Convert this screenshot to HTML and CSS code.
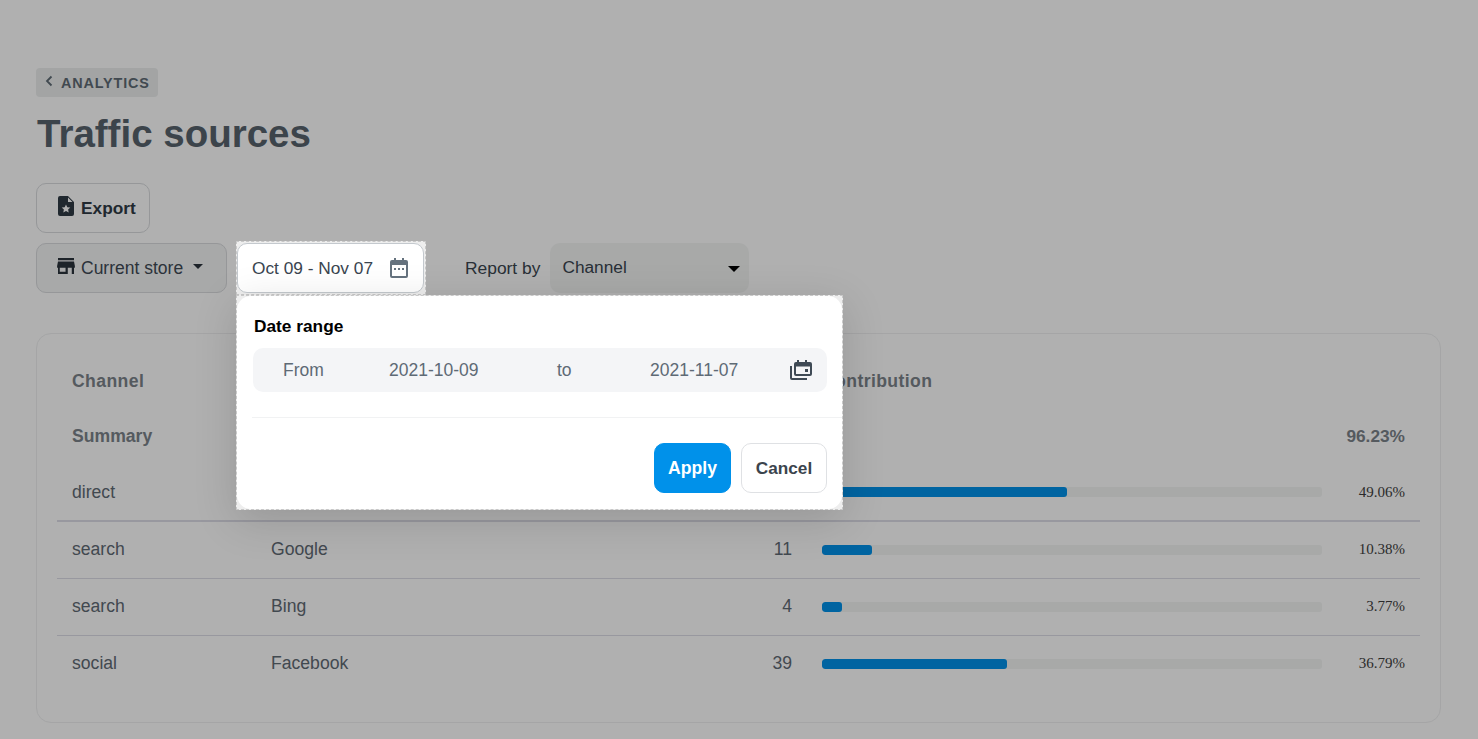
FILE: index.html
```html
<!DOCTYPE html>
<html lang="en">
<head>
<meta charset="utf-8">
<title>Traffic sources</title>
<link rel="stylesheet" href="styles.css">
</head>
<body>
<main class="page">
  <a class="back" href="#">
    <svg class="back-icon" viewBox="0 0 10 12" width="10" height="12"><path d="M7.500 1.500 3 6l4.500 4.500" fill="none" stroke="currentColor" stroke-width="1.800"/></svg>
    <span>ANALYTICS</span>
  </a>
  <h1 class="title">Traffic sources</h1>
  <div class="toolbar">
    <button class="btn btn-export" type="button">
      <svg viewBox="0 0 16 20" width="16" height="20"><path fill-rule="evenodd" fill="currentColor" d="M2 0h8l6 6v12a2 2 0 0 1-2 2H2a2 2 0 0 1-2-2V2a2 2 0 0 1 2-2Zm8 1.500V6h4.500ZM8 8.500l1.300 2.700 3 .4-2.200 2 .6 3L8 15.100 5.300 16.600l.6-3-2.200-2 3-.4Z"/></svg>
      Export
    </button>
  </div>
  <div class="filters">
    <button class="btn btn-store" type="button">
      <svg viewBox="0 0 20 18" width="18" height="16"><path fill="currentColor" fill-rule="evenodd" d="M1 0h18v2.500H1ZM1 4h18l1 5v2h-1v7h-2.500v-7H12v7H1v-7H0V9Zm2 7v4.500h6.500V11Z"/></svg>
      Current store
      <span class="caret"></span>
    </button>
    <div class="date-slot"></div>
    <span class="report-label">Report by</span>
    <div class="select"><span>Channel</span><span class="select-caret"></span></div>
  </div>

  <section class="card">
    <table class="report">
      <colgroup><col class="c1"><col class="c2"><col class="c3"><col></colgroup>
      <thead>
        <tr><th>Channel</th><th></th><th class="num"></th><th>Contribution</th></tr>
      </thead>
      <tbody>
        <tr class="summary"><td>Summary</td><td></td><td class="num"></td><td class="pct-big">96.23%</td></tr>
        <tr class="first"><td>direct</td><td></td><td class="num"></td><td><div class="metric"><div class="track"><div class="fill" style="width:49%"></div></div><span class="pct">49.06%</span></div></td></tr>
        <tr><td>search</td><td>Google</td><td class="num">11</td><td><div class="metric"><div class="track"><div class="fill" style="width:10%"></div></div><span class="pct">10.38%</span></div></td></tr>
        <tr><td>search</td><td>Bing</td><td class="num">4</td><td><div class="metric"><div class="track"><div class="fill" style="width:4%"></div></div><span class="pct">3.77%</span></div></td></tr>
        <tr class="last"><td>social</td><td>Facebook</td><td class="num">39</td><td><div class="metric"><div class="track"><div class="fill" style="width:37%"></div></div><span class="pct">36.79%</span></div></td></tr>
      </tbody>
    </table>
  </section>
</main>

<div class="backdrop"></div>

<div class="date-float">
  <button class="date-btn" type="button">
    <span>Oct 09 - Nov 07</span>
    <svg viewBox="0 0 18 20" width="18" height="20"><path fill="currentColor" fill-rule="evenodd" d="M4 0h2v2h6V0h2v2h2a2 2 0 0 1 2 2v14a2 2 0 0 1-2 2H2a2 2 0 0 1-2-2V4a2 2 0 0 1 2-2h2Zm-2 7v11h14V7ZM4 10h2v2H4Zm4 0h2v2H8Zm4 0h2v2h-2Z"/></svg>
  </button>
</div>

<div class="popup-shell">
  <div class="popup">
    <h2 class="popup-title">Date range</h2>
    <div class="range">
      <span class="range-from">From</span>
      <span class="range-start">2021-10-09</span>
      <span class="range-to">to</span>
      <span class="range-end">2021-11-07</span>
      <svg class="range-icon" viewBox="0 0 22 20" width="22" height="20"><path fill="currentColor" fill-rule="evenodd" d="M7 0h2v2h6V0h2v2h3a2 2 0 0 1 2 2v10a2 2 0 0 1-2 2H6a2 2 0 0 1-2-2V4a2 2 0 0 1 2-2h1Zm-1 6.500V14h14V6.500ZM15 9h3v3h-3ZM0 6h2v12h15v2H2a2 2 0 0 1-2-2Z"/></svg>
    </div>
    <div class="popup-foot">
      <button class="btn-apply" type="button">Apply</button>
      <button class="btn-cancel" type="button">Cancel</button>
    </div>
  </div>
</div>
</body>
</html>
```
FILE: styles.css
```css
* { box-sizing: border-box; }
html, body { margin: 0; height: 100%; }
body {
  background: #fff;
  color: #212b36;
  font-family: "Liberation Sans", Arial, sans-serif;
  font-size: 16px;
  overflow: hidden;
}
button { font-family: inherit; cursor: pointer; }

.page { padding: 68px 37px 0 36px; }

.back {
  display: inline-flex;
  align-items: center;
  gap: 7px;
  height: 29px;
  padding: 0 8px;
  background: #eceeee;
  border-radius: 4px;
  color: #5f6b75;
  font-size: 14.4px;
  font-weight: 700;
  letter-spacing: 0.85px;
  text-decoration: none;
  vertical-align: top;
}
.back-icon { margin-top: -3px; }

.title {
  margin: 15px 0 28px 1px;
  font-size: 38.5px;
  line-height: 43px;
  font-weight: 700;
  color: #58636d;
}

.btn {
  display: inline-flex;
  align-items: center;
  height: 50px;
  border: 1px solid #d9dbde;
  border-radius: 10px;
  background: #fff;
  color: #2f3a45;
  font-size: 17.5px;
}
.toolbar { height: 60px; }
.btn-export {
  width: 114px;
  padding: 0 0 0 21px;
  gap: 7px;
  font-weight: 700;
  background: transparent;
  font-size: 17.3px;
}
.btn-export svg { margin-top: -4px; }
.btn-store {
  width: 191px;
  padding: 0 0 0 20px;
  gap: 6px;
  background: #f4f5f5;
  color: #3f4a55;
}
.btn-store svg { margin-top: -4px; color: #2a333c; }
.caret {
  width: 0; height: 0;
  margin: -4px 0 0 4px;
  border-left: 5px solid transparent;
  border-right: 5px solid transparent;
  border-top: 5px solid #2a333c;
}

.filters { display: flex; align-items: center; height: 50px; }
.date-slot { width: 189px; height: 50px; margin-left: 10px; flex: none; }
.date-btn {
  display: flex;
  align-items: center;
  justify-content: space-between;
  width: 187px;
  height: 50px;
  padding: 0 15px 0 14px;
  border: 1px solid #c4c9ce;
  border-radius: 10px;
  background: #fff;
  color: #3a4550;
}
.date-btn span { font-size: 17.3px; }
.date-btn svg { color: #65727e; }

.report-label { margin-left: 39px; color: #3b4650; font-size: 17.4px; }
.select {
  display: flex;
  align-items: center;
  justify-content: space-between;
  width: 199px;
  height: 50px;
  margin-left: 10px;
  padding: 0 9px 2px 12px;
  background: #f3f5f4;
  border-radius: 10px;
  color: #3a4550;
  font-size: 17.3px;
}
.select-caret {
  width: 0; height: 0;
  margin-top: 4px;
  border-left: 6px solid transparent;
  border-right: 6px solid transparent;
  border-top: 6px solid #000;
}

.card {
  margin-top: 40px;
  height: 390px;
  padding: 20px;
  border: 1px solid #eff0f1;
  border-radius: 15px;
  background: #fff;
}
.report { width: 1363px; border-collapse: collapse; table-layout: fixed; color: #5f6a74; }
.c1 { width: 199px; }
.c2 { width: 300px; }
.c3 { width: 251px; }
.report th, .report td { padding: 0 15px; text-align: left; font-size: 17.6px; font-weight: 400; }
.report th {
  height: 55px;
  font-weight: 700;
  color: #7b838a;
  letter-spacing: 0.4px;
}
.report td { height: 57px; border-top: 1px solid #dcdde6; }
.report .num { text-align: right; }
.summary td { height: 55px; border-top: 0; font-weight: 700; color: #7b838a; }
.first td { border-top: 0; border-bottom: 2px solid #dcdde6; height: 57px; }
.first + tr td { border-top: 0; }
.report .pct-big { text-align: right; font-size: 17.3px; }
.metric { display: flex; align-items: center; justify-content: space-between; }
.track { width: 500px; height: 10px; background: #f3f5f4; border-radius: 3px; overflow: hidden; }
.fill { height: 100%; background: #0091ea; border-radius: 3px; }
.pct {
  font-family: "Liberation Serif", "Times New Roman", serif;
  font-size: 15px;
  color: #3e3e3e;
}

.backdrop { position: fixed; inset: 0; background: rgba(0, 0, 0, 0.31); }

.date-float {
  position: absolute;
  left: 236px;
  top: 241px;
  width: 190px;
  height: 54px;
  padding: 2px 1px;
  background: #eee;
  outline: 1px dashed #c8c8c8;
  outline-offset: -1px;
}
.popup-shell {
  position: absolute;
  left: 236px;
  top: 295px;
  width: 607px;
  height: 215px;
  background: #eee;
  border: 1px dashed #c8c8c8;
  box-shadow: 0 10px 40px rgba(0, 0, 0, 0.15);
}
.popup {
  height: 100%;
  padding: 20px 0 0;
  background: #fff;
  border-radius: 14px;
}
.popup-title {
  margin: 0 0 0 17px;
  font-size: 17.3px;
  line-height: 20px;
  font-weight: 700;
  color: #000;
}
.range {
  display: flex;
  align-items: center;
  height: 44px;
  margin: 12px 15px 0 16px;
  background: #f4f5f7;
  border-radius: 10px;
  color: #5e6a75;
  font-size: 17.5px;
}
.range-from { margin-left: 30px; width: 106px; }
.range-start { width: 168px; }
.range-to { width: 93px; }
.range-end { width: 140px; }
.range-icon { color: #3f4a55; }
.popup-foot {
  display: flex;
  justify-content: flex-end;
  gap: 10px;
  height: 76px;
  margin: 25px 0 0 15px;
  padding: 25px 15px 0 0;
  border-top: 1px solid #f1f2f3;
}
.btn-apply, .btn-cancel {
  height: 50px;
  border-radius: 10px;
  font-weight: 700;
}
.btn-apply { width: 77px; border: 1px solid #0091ea; background: #0091ea; color: #fff; font-size: 17.6px; }
.btn-cancel { width: 86px; border: 1px solid #dfe1e4; background: #fff; color: #3b444d; font-size: 17.2px; }
```
